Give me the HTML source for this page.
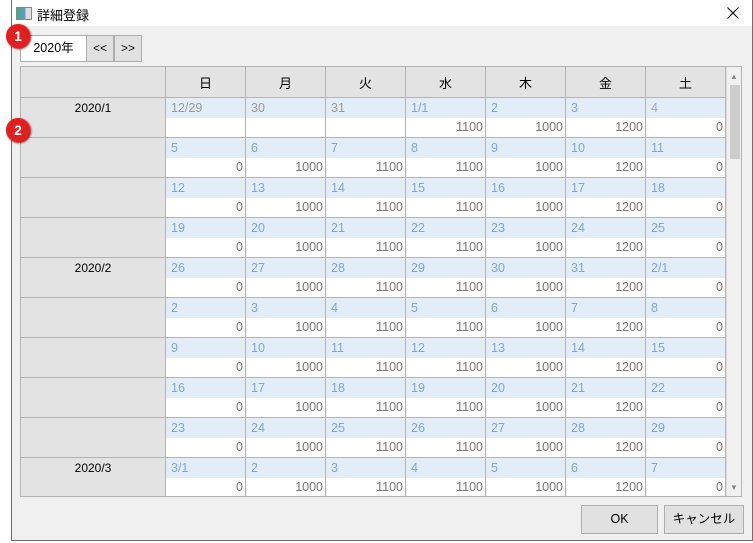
<!DOCTYPE html><html><head><meta charset="utf-8"><style>
body{margin:0;width:753px;height:543px;background:#fff;position:relative;overflow:hidden;font-family:"Liberation Sans","Noto Sans CJK JP",sans-serif;font-size:12px}
.win{position:absolute;left:11px;top:0;width:740px;height:540px;border:1px solid #6e6e6e;border-top:none;background:#f0f0f0}
.tb{position:absolute;left:0;top:0;width:740px;height:26px;background:#fff}
.grid{position:absolute;left:20px;top:66px;width:722px;height:431px;border:1px solid #b4b4b4;box-sizing:border-box;background:#fff;overflow:hidden}
table{border-collapse:collapse;position:absolute;left:-1px;top:-1px;table-layout:fixed}
td{border:1px solid #b4b4b4;padding:0;height:39px;vertical-align:top}
th{border:1px solid #b4b4b4;background:#e3e3e3;font-weight:normal;height:30px;box-sizing:border-box;font-size:13px;padding:0}
td.l{background:#e3e3e3;text-align:center;padding-top:3px;height:36px;font-size:12px}
.d{height:20px;background:#e3edf7;color:#7aa7e8;padding-left:5px;line-height:20px;font-size:12.5px}
.g{color:#999}
.v{height:19px;text-align:right;padding-right:2px;color:#777;line-height:19px;font-size:12.5px}
.btn{position:absolute;border:1px solid #adadad;background:#e1e1e1;text-align:center;box-sizing:border-box}
.badge{position:absolute;width:24px;height:24px;border-radius:50%;background:#e02020;color:#fff;font-weight:bold;text-align:center;line-height:24px;font-size:14px;box-shadow:1px 1px 2px #900}
</style></head><body>
<div class="win">
<div class="tb">
<div style="position:absolute;left:4px;top:7px;width:14px;height:11px;border:1px solid #888;background:linear-gradient(90deg,#4a8 0,#69c 60%,#ddd 60%)"></div>
<div style="position:absolute;left:25px;top:5px;font-size:13px">詳細登録</div>
<svg style="position:absolute;left:715px;top:7px" width="12" height="12"><path d="M0.5 0.5L11.5 11.5M11.5 0.5L0.5 11.5" stroke="#000" stroke-width="1"/></svg>
</div>
</div>
<div class="btn" style="left:20px;top:35px;width:67px;height:27px;background:#fff;line-height:25px;font-size:12.5px">2020年</div>
<div class="btn" style="left:86px;top:35px;width:28px;height:27px;line-height:25px">&lt;&lt;</div>
<div class="btn" style="left:114px;top:35px;width:28px;height:27px;line-height:25px">&gt;&gt;</div>
<div class="grid">
<table>
<colgroup><col style="width:145px"><col style="width:80px"><col style="width:80px"><col style="width:80px"><col style="width:80px"><col style="width:80px"><col style="width:80px"><col style="width:80px"></colgroup>
<tr style="height:31px"><th></th><th>日</th><th>月</th><th>火</th><th>水</th><th>木</th><th>金</th><th>土</th></tr>
<tr><td class="l">2020/1</td><td><div class="d g">12/29</div><div class="v"></div></td><td><div class="d g">30</div><div class="v"></div></td><td><div class="d g">31</div><div class="v"></div></td><td><div class="d">1/1</div><div class="v">1100</div></td><td><div class="d">2</div><div class="v">1000</div></td><td><div class="d">3</div><div class="v">1200</div></td><td><div class="d" style="color:#a9a0f0">4</div><div class="v">0</div></td></tr>
<tr><td class="l"></td><td><div class="d">5</div><div class="v">0</div></td><td><div class="d">6</div><div class="v">1000</div></td><td><div class="d">7</div><div class="v">1100</div></td><td><div class="d">8</div><div class="v">1100</div></td><td><div class="d">9</div><div class="v">1000</div></td><td><div class="d">10</div><div class="v">1200</div></td><td><div class="d">11</div><div class="v">0</div></td></tr>
<tr><td class="l"></td><td><div class="d">12</div><div class="v">0</div></td><td><div class="d">13</div><div class="v">1000</div></td><td><div class="d">14</div><div class="v">1100</div></td><td><div class="d">15</div><div class="v">1100</div></td><td><div class="d">16</div><div class="v">1000</div></td><td><div class="d">17</div><div class="v">1200</div></td><td><div class="d">18</div><div class="v">0</div></td></tr>
<tr><td class="l"></td><td><div class="d">19</div><div class="v">0</div></td><td><div class="d">20</div><div class="v">1000</div></td><td><div class="d">21</div><div class="v">1100</div></td><td><div class="d">22</div><div class="v">1100</div></td><td><div class="d">23</div><div class="v">1000</div></td><td><div class="d">24</div><div class="v">1200</div></td><td><div class="d">25</div><div class="v">0</div></td></tr>
<tr><td class="l">2020/2</td><td><div class="d">26</div><div class="v">0</div></td><td><div class="d">27</div><div class="v">1000</div></td><td><div class="d">28</div><div class="v">1100</div></td><td><div class="d">29</div><div class="v">1100</div></td><td><div class="d">30</div><div class="v">1000</div></td><td><div class="d">31</div><div class="v">1200</div></td><td><div class="d">2/1</div><div class="v">0</div></td></tr>
<tr><td class="l"></td><td><div class="d">2</div><div class="v">0</div></td><td><div class="d">3</div><div class="v">1000</div></td><td><div class="d">4</div><div class="v">1100</div></td><td><div class="d">5</div><div class="v">1100</div></td><td><div class="d">6</div><div class="v">1000</div></td><td><div class="d">7</div><div class="v">1200</div></td><td><div class="d">8</div><div class="v">0</div></td></tr>
<tr><td class="l"></td><td><div class="d">9</div><div class="v">0</div></td><td><div class="d">10</div><div class="v">1000</div></td><td><div class="d">11</div><div class="v">1100</div></td><td><div class="d">12</div><div class="v">1100</div></td><td><div class="d">13</div><div class="v">1000</div></td><td><div class="d">14</div><div class="v">1200</div></td><td><div class="d">15</div><div class="v">0</div></td></tr>
<tr><td class="l"></td><td><div class="d">16</div><div class="v">0</div></td><td><div class="d">17</div><div class="v">1000</div></td><td><div class="d">18</div><div class="v">1100</div></td><td><div class="d">19</div><div class="v">1100</div></td><td><div class="d">20</div><div class="v">1000</div></td><td><div class="d">21</div><div class="v">1200</div></td><td><div class="d">22</div><div class="v">0</div></td></tr>
<tr><td class="l"></td><td><div class="d">23</div><div class="v">0</div></td><td><div class="d">24</div><div class="v">1000</div></td><td><div class="d">25</div><div class="v">1100</div></td><td><div class="d">26</div><div class="v">1100</div></td><td><div class="d">27</div><div class="v">1000</div></td><td><div class="d">28</div><div class="v">1200</div></td><td><div class="d">29</div><div class="v">0</div></td></tr>
<tr><td class="l">2020/3</td><td><div class="d">3/1</div><div class="v">0</div></td><td><div class="d">2</div><div class="v">1000</div></td><td><div class="d">3</div><div class="v">1100</div></td><td><div class="d">4</div><div class="v">1100</div></td><td><div class="d">5</div><div class="v">1000</div></td><td><div class="d">6</div><div class="v">1200</div></td><td><div class="d">7</div><div class="v">0</div></td></tr>
</table>
<div style="position:absolute;left:705px;top:0;width:16px;height:429px;background:#f0f0f0;border-left:1px solid #ddd"></div>
<div style="position:absolute;left:709px;top:5px;font-size:8px;color:#888">▲</div>
<div style="position:absolute;left:709px;top:18px;width:10px;height:74px;background:#cdcdcd"></div>
<div style="position:absolute;left:709px;top:416px;font-size:8px;color:#888">▼</div>
</div>
<div class="btn" style="left:581px;top:505px;width:77px;height:29px;line-height:27px;font-size:12.5px">OK</div>
<div class="btn" style="left:664px;top:505px;width:80px;height:29px;line-height:27px;font-size:12.5px">キャンセル</div>
<div class="badge" style="left:6px;top:24px">1</div>
<div class="badge" style="left:6px;top:118px">2</div>
</body></html>
